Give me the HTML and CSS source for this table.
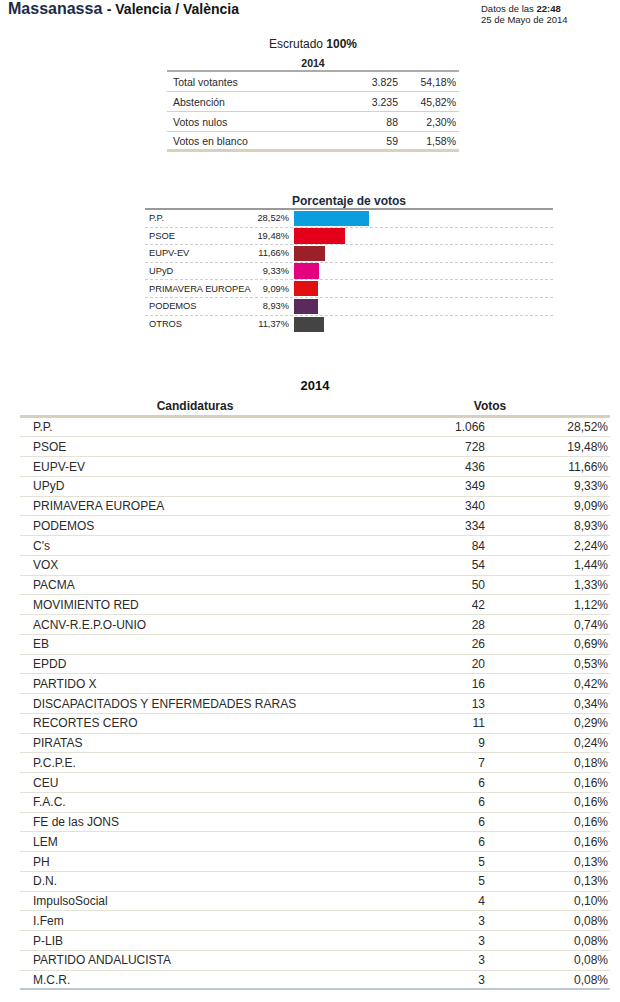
FILE: index.html
```html
<!DOCTYPE html>
<html lang="es">
<head>
<meta charset="utf-8">
<title>Massanassa - Valencia / València</title>
<link rel="stylesheet" href="styles.css">
</head>
<body>
<header class="top">
  <h1 class="title">Massanassa <span class="loc">- Valencia / València</span></h1>
  <div class="stamp">
    <div>Datos de las <b>22:48</b></div>
    <div>25 de Mayo de 2014</div>
  </div>
</header>

<section class="summary">
  <div class="escrutado">Escrutado <b>100%</b></div>
  <div class="sum-year">2014</div>
  <div class="sum-row"><span class="lab">Total votantes</span><span class="num">3.825</span><span class="pct">54,18%</span></div>
  <div class="sum-row"><span class="lab">Abstención</span><span class="num">3.235</span><span class="pct">45,82%</span></div>
  <div class="sum-row"><span class="lab">Votos nulos</span><span class="num">88</span><span class="pct">2,30%</span></div>
  <div class="sum-row last"><span class="lab">Votos en blanco</span><span class="num">59</span><span class="pct">1,58%</span></div>
</section>

<section class="chart">
  <div class="chart-title">Porcentaje de votos</div>
  <div class="bar-row"><span class="blab">P.P.</span><span class="bpct">28,52%</span><span class="bar pp" style="width:75px"></span></div>
  <div class="bar-row"><span class="blab">PSOE</span><span class="bpct">19,48%</span><span class="bar psoe" style="width:51px"></span></div>
  <div class="bar-row"><span class="blab">EUPV-EV</span><span class="bpct">11,66%</span><span class="bar eupv" style="width:31px"></span></div>
  <div class="bar-row"><span class="blab">UPyD</span><span class="bpct">9,33%</span><span class="bar upyd" style="width:25px"></span></div>
  <div class="bar-row"><span class="blab">PRIMAVERA EUROPEA</span><span class="bpct">9,09%</span><span class="bar prim" style="width:24px"></span></div>
  <div class="bar-row"><span class="blab">PODEMOS</span><span class="bpct">8,93%</span><span class="bar pod" style="width:24px"></span></div>
  <div class="bar-row"><span class="blab">OTROS</span><span class="bpct">11,37%</span><span class="bar otros" style="width:30px"></span></div>
</section>

<section class="big">
  <div class="big-year">2014</div>
  <div class="big-head"><span>Candidaturas</span><span>Votos</span></div>
  <div class="r"><span>P.P.</span><span>1.066</span><span>28,52%</span></div>
  <div class="r"><span>PSOE</span><span>728</span><span>19,48%</span></div>
  <div class="r"><span>EUPV-EV</span><span>436</span><span>11,66%</span></div>
  <div class="r"><span>UPyD</span><span>349</span><span>9,33%</span></div>
  <div class="r"><span>PRIMAVERA EUROPEA</span><span>340</span><span>9,09%</span></div>
  <div class="r"><span>PODEMOS</span><span>334</span><span>8,93%</span></div>
  <div class="r"><span>C's</span><span>84</span><span>2,24%</span></div>
  <div class="r"><span>VOX</span><span>54</span><span>1,44%</span></div>
  <div class="r"><span>PACMA</span><span>50</span><span>1,33%</span></div>
  <div class="r"><span>MOVIMIENTO RED</span><span>42</span><span>1,12%</span></div>
  <div class="r"><span>ACNV-R.E.P.O-UNIO</span><span>28</span><span>0,74%</span></div>
  <div class="r"><span>EB</span><span>26</span><span>0,69%</span></div>
  <div class="r"><span>EPDD</span><span>20</span><span>0,53%</span></div>
  <div class="r"><span>PARTIDO X</span><span>16</span><span>0,42%</span></div>
  <div class="r"><span>DISCAPACITADOS Y ENFERMEDADES RARAS</span><span>13</span><span>0,34%</span></div>
  <div class="r"><span>RECORTES CERO</span><span>11</span><span>0,29%</span></div>
  <div class="r"><span>PIRATAS</span><span>9</span><span>0,24%</span></div>
  <div class="r"><span>P.C.P.E.</span><span>7</span><span>0,18%</span></div>
  <div class="r"><span>CEU</span><span>6</span><span>0,16%</span></div>
  <div class="r"><span>F.A.C.</span><span>6</span><span>0,16%</span></div>
  <div class="r"><span>FE de las JONS</span><span>6</span><span>0,16%</span></div>
  <div class="r"><span>LEM</span><span>6</span><span>0,16%</span></div>
  <div class="r"><span>PH</span><span>5</span><span>0,13%</span></div>
  <div class="r"><span>D.N.</span><span>5</span><span>0,13%</span></div>
  <div class="r"><span>ImpulsoSocial</span><span>4</span><span>0,10%</span></div>
  <div class="r"><span>I.Fem</span><span>3</span><span>0,08%</span></div>
  <div class="r"><span>P-LIB</span><span>3</span><span>0,08%</span></div>
  <div class="r"><span>PARTIDO ANDALUCISTA</span><span>3</span><span>0,08%</span></div>
  <div class="r last"><span>M.C.R.</span><span>3</span><span>0,08%</span></div>
</section>
</body>
</html>
```

FILE: styles.css
```css
* { box-sizing: border-box; }

body {
  margin: 0;
  background: #fff;
  color: #2a2a2a;
  font-family: "Liberation Sans", Arial, sans-serif;
}

.top {
  display: flex;
  justify-content: space-between;
  align-items: flex-start;
  height: 26px;
  padding-left: 8px;
}

.title {
  margin: 0;
  font-size: 16px;
  line-height: 18px;
  font-weight: bold;
  color: #1b2c48;
}

.title .loc {
  font-size: 14px;
  color: #141414;
}

.stamp {
  width: 139px;
  margin-top: 3px;
  font-size: 9.5px;
  line-height: 11px;
  color: #222;
}

/* Summary */
.summary {
  width: 292px;
  margin-left: 167px;
}

.escrutado {
  margin-top: 11px;
  text-align: center;
  font-size: 12px;
  line-height: 14px;
  color: #222;
}

.sum-year {
  margin-top: 6px;
  padding-bottom: 1px;
  text-align: center;
  font-size: 10.5px;
  line-height: 12px;
  font-weight: bold;
  color: #222;
  border-bottom: 2px solid #ababab;
}

.sum-row {
  display: grid;
  grid-template-columns: 1fr 100px 61px;
  align-items: center;
  height: 20px;
  font-size: 10.5px;
  border-bottom: 1px solid #c8d2dd;
}

.sum-row .lab { padding-left: 6px; }
.sum-row .num { text-align: right; }
.sum-row .pct { text-align: right; padding-right: 3px; }

.sum-row.last { border-bottom: 3px solid #d8d1bd; }

/* Chart */
.chart {
  width: 408px;
  margin-left: 145px;
  margin-top: 42px;
}

.chart-title {
  text-align: center;
  font-size: 12px;
  line-height: 14px;
  font-weight: bold;
  color: #1c2a3c;
  border-bottom: 2px solid #9a9a9a;
}

.bar-row {
  display: grid;
  grid-template-columns: 98px 46px 1fr;
  align-items: center;
  height: 17.6px;
  font-size: 9.3px;
  color: #222;
  border-bottom: 1px dashed #cfcfcf;
}

.bar-row:last-child { border-bottom: none; }

.blab { padding-left: 4px; white-space: nowrap; }
.bpct { text-align: right; }

.bar {
  display: block;
  height: 15.5px;
  margin-left: 5px;
}

.pp { background: #0b9ddd; }
.psoe { background: #e2001a; }
.eupv { background: #9a2127; }
.upyd { background: #e4037e; }
.prim { background: #e01010; }
.pod { background: #5a2a5c; }
.otros { background: #444444; }

/* Big table */
.big {
  width: 590px;
  margin-left: 20px;
  margin-top: 45px;
}

.big-year {
  text-align: center;
  font-size: 13px;
  line-height: 15px;
  font-weight: bold;
  color: #111;
}

.big-head {
  display: grid;
  grid-template-columns: 350px 240px;
  margin-top: 5.5px;
  padding-bottom: 2px;
  font-size: 12px;
  line-height: 14px;
  font-weight: bold;
  color: #222;
  text-align: center;
  border-bottom: 3px solid #d6d1be;
}

.r {
  display: grid;
  grid-template-columns: 350px 120px 120px;
  align-items: center;
  height: 19.75px;
  font-size: 12px;
  color: #2a2a2a;
  border-bottom: 1px solid #e4e1d6;
}

.r span:first-child { padding-left: 13px; white-space: nowrap; }
.r span:nth-child(2) { text-align: right; padding-right: 5px; }
.r span:nth-child(3) { text-align: right; padding-right: 2px; }

.r.last { border-bottom: 2px solid #bcc8d4; }
```
